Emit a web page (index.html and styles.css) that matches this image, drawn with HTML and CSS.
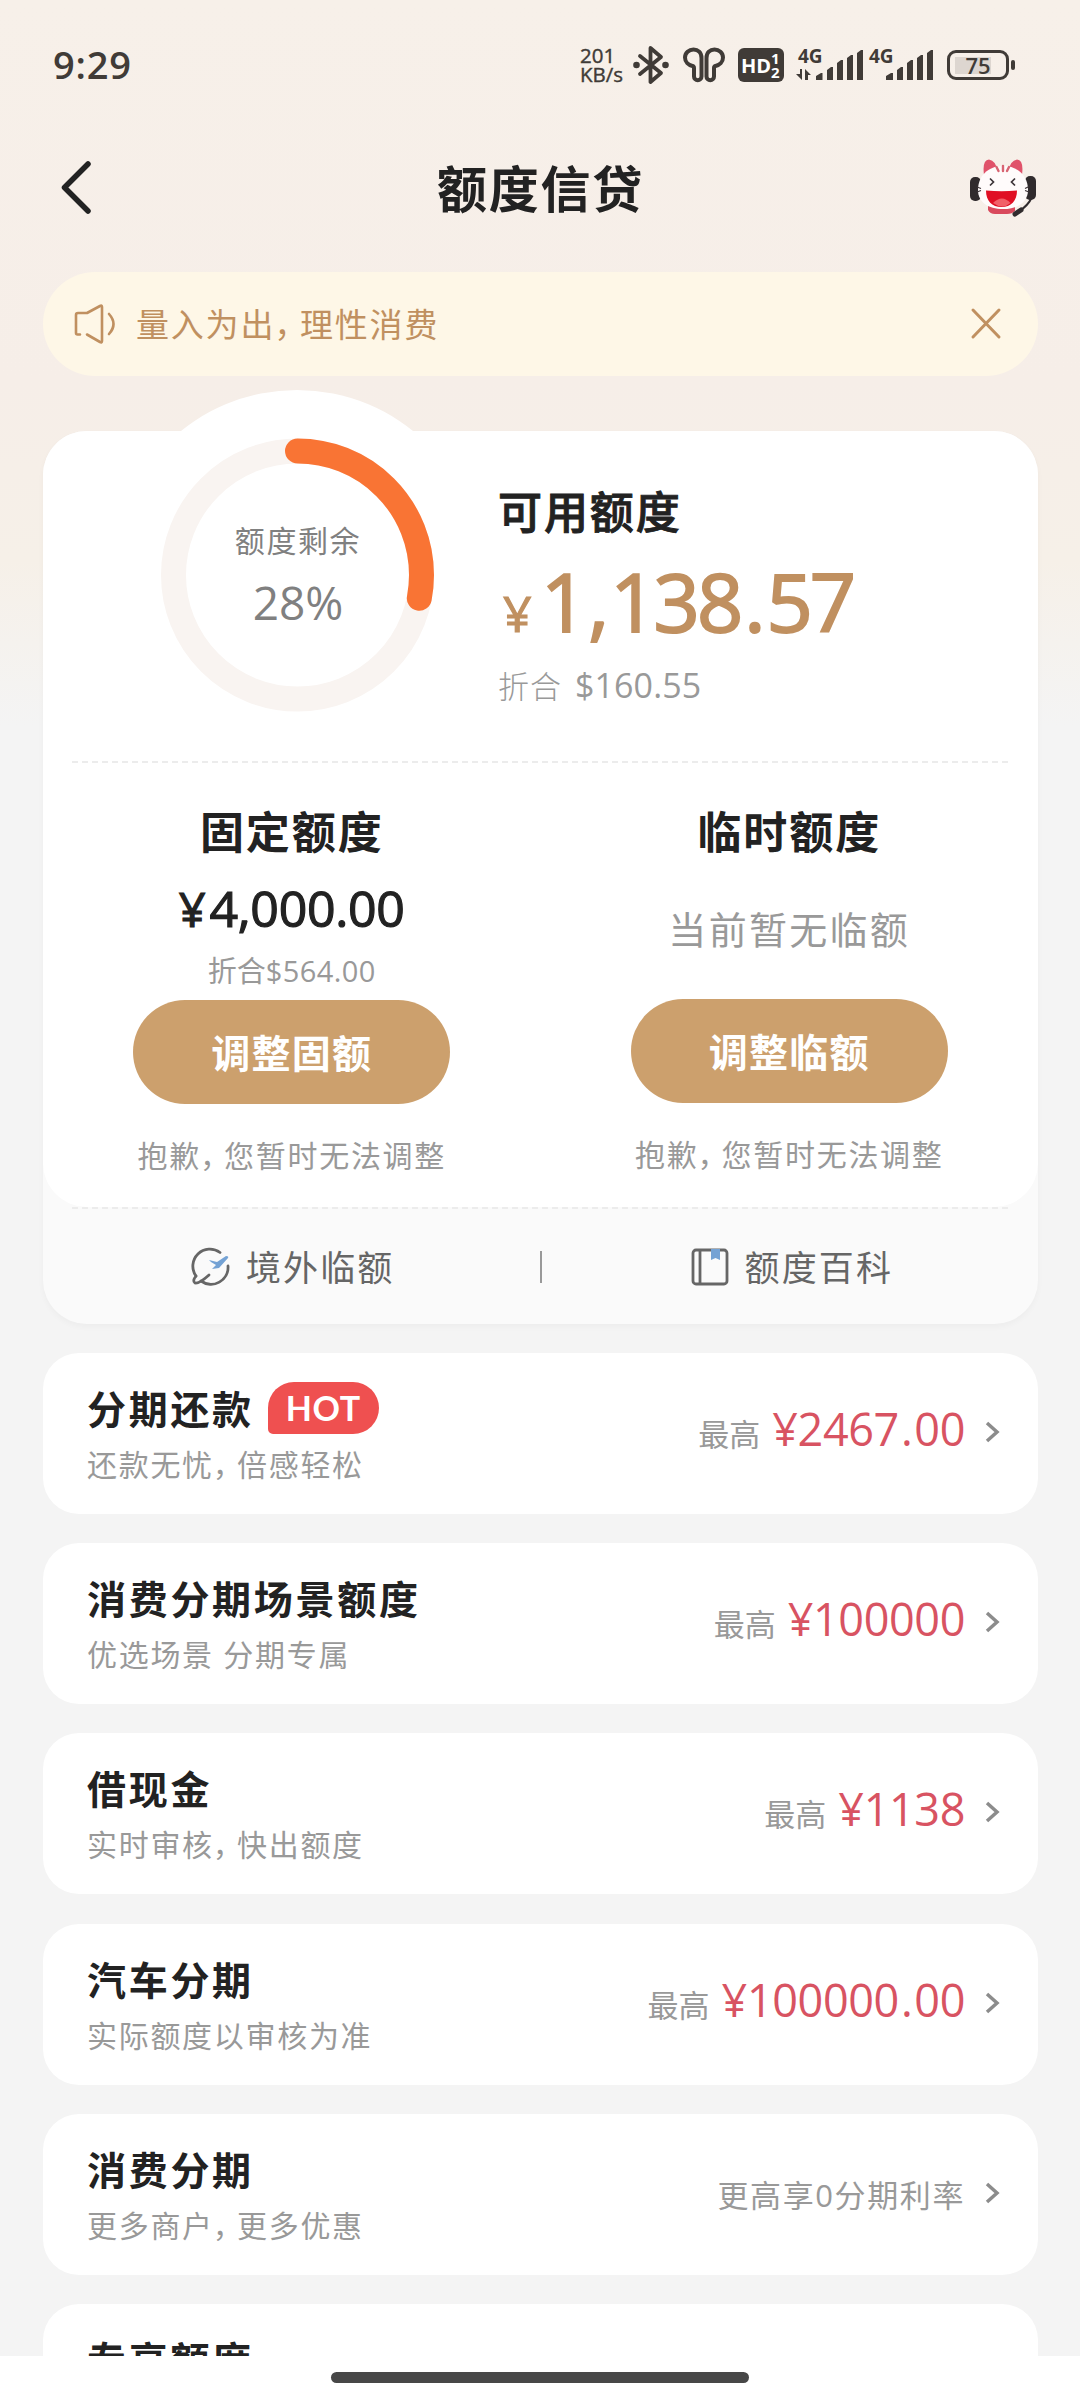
FILE: index.html
```html
<!DOCTYPE html>
<html lang="zh-CN">
<head>
<meta charset="utf-8">
<title>额度信贷</title>
<link rel="stylesheet" href="styles.css">
</head>
<body>
<div class="screen">
  <header class="status">
    <span class="clock">9:29</span>
    <div class="indicators">
      <div class="speed"><span>201</span><span>KB/s</span></div>
      <svg class="ic-bt" width="36" height="40" viewBox="0 0 36 40" fill="none" stroke="#403b37" stroke-width="3.8" stroke-linejoin="round" stroke-linecap="round"><path d="M7 11 28 28 17.500 37V3L28 12 7 29"/><circle cx="3.500" cy="20" r="3.300" fill="#403b37" stroke="none"/><circle cx="32.500" cy="20" r="3.300" fill="#403b37" stroke="none"/></svg>
      <svg class="ic-buds" width="42" height="36" viewBox="0 0 42 36" fill="none" stroke="#403b37" stroke-width="4" stroke-linejoin="round"><path d="M18.500 11C18.500 5.500 15 2.500 10.500 2.500S2 6 2 10.500s3.500 7.500 7.500 8.500Q11 19.500 11 21v8.500a3.750 3.750 0 0 0 7.500 0Z"/><path d="M23.500 11c0-5.500 3.500-8.500 8-8.500S40 6 40 10.500s-3.500 7.500-7.500 8.500Q31 19.500 31 21v8.500a3.750 3.750 0 0 1-7.500 0Z"/></svg>
      <div class="hd"><span>HD</span><span class="hd-n"><i>1</i><i>2</i></span></div>
      <svg class="ic-sig" width="67" height="34" viewBox="0 0 67 34" fill="#403b37"><text x="2" y="15" class="gen">4G</text><path d="M6 21v11L0 26h4v-5ZM9 32V21l6 6h-3v5ZM20 32v-4l5-3h1.500v7ZM31 32V22l4-3h2v13ZM41 32V15l4-3h2v20ZM51 32V10l4-3h2v25ZM61 32V5l4-3h2v30Z"/></svg>
      <svg class="ic-sig2" width="66" height="34" viewBox="0 0 66 34" fill="#403b37"><text x="1" y="15" class="gen">4G</text><path d="M18 32v-4l5-3h2v7ZM29 32V22l4-3h2v13ZM39 32V15l4-3h2v20ZM49 32V10l4-3h2v25ZM59 32V5l4-3h2v30Z"/></svg>
      <div class="battery"><span>75</span></div><span class="cap"></span>
    </div>
  </header>

  <nav class="titlebar">
    <svg width="32" height="56" viewBox="0 0 32 56" fill="none" stroke="#222" stroke-width="5.500" stroke-linecap="round" stroke-linejoin="round"><path d="M27 4 3.500 27.500 27 51"/></svg>
    <h1>额度信贷</h1>
    <svg class="mascot" width="70" height="60" viewBox="0 0 70 60">
      <rect x="2" y="19" width="11" height="24" rx="5" fill="#302b2d"/><rect x="57" y="18" width="11" height="24" rx="5" fill="#302b2d"/>
      <path d="M16 17Q14 2 21 1.500 28 3 29 12ZM54 17Q56 2 49 1.500 42 3 41 12Z" fill="#e0526a"/>
      <path d="M20 48h27v5q-3 3-8 3H27q-5 0-7-4Z" fill="#d94a5d"/>
      <path d="M35 8C51 8 60 19 60 32c0 12-10 19-25 19S10 44 10 32C10 19 19 8 35 8Z" fill="#fffbfb"/>
      <path d="m28.500 9 2 4M35 8v5m6-4-2 4" fill="none" stroke="#d86472" stroke-width="2.400" stroke-linecap="round"/>
      <path d="m22 20.500 3.500 3.500-3.500 3.500M47 20.500l-3.500 3.500 3.500 3.500" fill="none" stroke="#3d3438" stroke-width="1.700"/>
      <path d="m9 29 4 1.500M9 34l4-1.500M61 28.500l-4 2M61 34l-4-1.500" stroke="#3d3438" stroke-width="1.200"/>
      <path d="M18 32.500q15.500 1.500 31 0c0 10.500-6 16.500-15.500 16.500S18 43 18 32.500Z" fill="#e00f24"/>
      <path d="M25 45q9-9 17.500 0-8 7-17.500 0Z" fill="#f16068"/>
      <path d="M64 39q-4 9-14 15" fill="none" stroke="#302b2d" stroke-width="2"/><path d="m47 56 6-4" stroke="#302b2d" stroke-width="5" stroke-linecap="round"/>
    </svg>
  </nav>

  <div class="notice">
    <svg width="42" height="40" viewBox="0 0 42 40" fill="none" stroke="#c09060" stroke-width="2.600" stroke-linecap="round" stroke-linejoin="round"><path d="M6 30.500H3.500Q2 30.500 2 29V11q0-2 2-2h9L26 2q2-1 2 1v34q0 2-2 1l-13-7.500M35 10q9 10 0 20"/></svg>
    <span class="notice-text">量入为出<span class="comma">，</span>理性消费</span>
    <svg width="32" height="32" viewBox="0 0 32 32" fill="none" stroke="#c09060" stroke-width="3" stroke-linecap="round"><path d="m3 2 26 27M29 2 3 29"/></svg>
  </div>

  <section class="quota">
    <div class="quota-main">
      <div class="summary">
        <div class="gauge">
          <svg width="274" height="274" viewBox="0 0 274 274" fill="none" stroke-width="25"><circle cx="136.500" cy="137" r="124" stroke="#f9f4f1"/><circle cx="136.500" cy="137" r="124" stroke="#f97434" stroke-linecap="round" pathLength="100" stroke-dasharray="28 100" transform="rotate(-90 136.500 137)"/></svg>
          <div class="gauge-label"><span>额度剩余</span><b>28%</b></div>
        </div>
        <div class="available">
          <h2>可用额度</h2>
          <div class="amount"><small>¥</small>1<i>,</i>138<i>.</i>57</div>
          <div class="usd">折合<span>$160.55</span></div>
        </div>
      </div>
      <div class="dash"></div>
      <div class="cols">
        <div class="col">
          <h2>固定额度</h2>
          <div class="fixed"><span class="yen">¥</span>4,000.00</div>
          <div class="fixed-usd">折合<span>$564.00</span></div>
          <button>调整固额</button>
          <p>抱歉<span class="comma">，</span>您暂时无法调整</p>
        </div>
        <div class="col">
          <h2>临时额度</h2>
          <div class="none">当前暂无临额</div>
          <button>调整临额</button>
          <p>抱歉<span class="comma">，</span>您暂时无法调整</p>
        </div>
      </div>
    </div>
    <div class="dash"></div>
    <div class="links">
      <div class="link"><svg width="38" height="38" viewBox="0 0 38 38" fill="none" stroke="#666" stroke-width="2.800" stroke-linecap="round"><path d="M28 4.500A17 17 0 0 0 4 28M9 33A17 17 0 0 0 36 18"/><path d="M4 28q-4 5-1 7 4 1 14-8"/><path d="m17 12 8 2 9-6q3 0 2 2l-9 10-7 1 4-4-5-3Z" fill="#74a2d4" stroke="none"/></svg><span>境外临额</span></div>
      <i class="bar"></i>
      <div class="link"><svg width="38" height="38" viewBox="0 0 38 38" fill="none" stroke="#666" stroke-width="2.800"><rect x="2" y="2" width="34" height="34" rx="3"/><path d="M9 2v34"/><path d="M20 1h9v11l-4.500-2-4.500 2Z" fill="#74a2d4" stroke="none"/></svg><span>额度百科</span></div>
    </div>
  </section>

  <main class="list">
    <article class="item"><div class="item-text"><h3>分期还款<em>HOT</em></h3><p>还款无忧<span class="comma">，</span>倍感轻松</p></div><div class="item-value"><span>最高</span><strong>¥2467<i>.</i>00</strong></div><svg width="16" height="22" viewBox="0 0 16 22"><path d="m3 2 10 9-10 9"/></svg></article>
    <article class="item"><div class="item-text"><h3>消费分期场景额度</h3><p>优选场景 分期专属</p></div><div class="item-value"><span>最高</span><strong>¥100000</strong></div><svg width="16" height="22" viewBox="0 0 16 22"><path d="m3 2 10 9-10 9"/></svg></article>
    <article class="item"><div class="item-text"><h3>借现金</h3><p>实时审核<span class="comma">，</span>快出额度</p></div><div class="item-value"><span>最高</span><strong>¥1138</strong></div><svg width="16" height="22" viewBox="0 0 16 22"><path d="m3 2 10 9-10 9"/></svg></article>
    <article class="item"><div class="item-text"><h3>汽车分期</h3><p>实际额度以审核为准</p></div><div class="item-value"><span>最高</span><strong>¥100000<i>.</i>00</strong></div><svg width="16" height="22" viewBox="0 0 16 22"><path d="m3 2 10 9-10 9"/></svg></article>
    <article class="item"><div class="item-text"><h3>消费分期</h3><p>更多商户<span class="comma">，</span>更多优惠</p></div><div class="item-value item-note">更高享0分期利率</div><svg width="16" height="22" viewBox="0 0 16 22"><path d="m3 2 10 9-10 9"/></svg></article>
    <article class="item"><div class="item-text"><h3>专享额度</h3></div></article>
  </main>
  <footer class="home"><span></span></footer>
</div>
</body>
</html>
```
FILE: styles.css
```css
* { box-sizing: border-box; margin: 0; padding: 0; }
body { font-family: "Open Sans", "Noto Sans CJK SC", sans-serif; color: #222; }
i, em { font-style: normal; }
svg { display: block; flex: none; overflow: visible; }
.screen { width: 1080px; height: 2400px; overflow: hidden; display: flex; flex-direction: column; background: linear-gradient(#f7f0e9 0, #f6eee8 380px, #f6f0e8 560px, #f4f4f4 725px); }
.comma { font-family: "Noto Sans CJK SC", sans-serif; font-feature-settings: "halt"; line-height: 1; margin: 0 7.500px 0 -1px; }

.status { height: 130px; padding: 0 64px 0 53px; display: flex; align-items: center; justify-content: space-between; color: #403b37; flex: none; }
.clock { font-size: 38px; font-weight: 600; letter-spacing: .8px; margin-top: -2px; }
.indicators { display: flex; align-items: center; }
.speed { display: flex; flex-direction: column; font-size: 20.500px; line-height: 19px; width: 52px; font-weight: 500; -webkit-text-stroke: .4px #403b37; }
.ic-bt { margin-left: 1px; }
.ic-buds { margin-left: 14px; }
.hd { margin-left: 13px; width: 46px; height: 34px; border-radius: 6px; background: #403b37; color: #fff; display: flex; align-items: center; font-size: 20px; font-weight: 700; padding-left: 3px; }
.hd-n { display: flex; flex-direction: column; font-size: 15px; line-height: 14px; }
.gen { font: 700 19px "Open Sans", sans-serif; }
.ic-sig { margin-left: 12px; }
.ic-sig2 { margin-left: 5px; }
.battery { margin-left: 13px; width: 62px; height: 30px; border: 3px solid #403b37; border-radius: 9px; display: flex; align-items: center; justify-content: center; font-size: 22px; font-weight: 600; background: linear-gradient(#ddd6d0, #ddd6d0) 5px center / 36px 17px no-repeat; }
.cap { width: 4px; height: 10px; border-radius: 2px; background: #403b37; margin: 0 1px 0 2px; }

.titlebar { height: 142px; padding: 0 42px 26px 61px; display: flex; align-items: center; justify-content: space-between; flex: none; }
.titlebar h1 { font-size: 50px; line-height: 60px; letter-spacing: 1.7px; margin: 2px 0 0 20px; }

.notice { margin: 0 42px 0 43px; height: 104px; border-radius: 52px; background: #fef7e7; display: flex; align-items: center; padding: 0 36px 0 31px; color: #c09060; flex: none; }
.notice-text { flex: 1; margin-left: 20px; font-size: 33px; letter-spacing: 1.8px; margin-top: -2px; }

.quota { margin: 55px 42px 0 43px; height: 893px; border-radius: 44px; background: #fafafa; box-shadow: 0 3px 6px rgba(0,0,0,.03); flex: none; }
.quota-main { height: 776px; border-radius: 44px; background: #fff; }
.summary { height: 330px; display: flex; }
.gauge { position: relative; width: 455px; padding: 7px 0 0 118px; }
.gauge::before { content: ""; position: absolute; left: 69px; top: -41px; width: 370px; height: 370px; border-radius: 50%; background: #fff; }
.gauge svg { position: relative; }
.gauge-label { position: absolute; left: 118px; top: 7px; width: 274px; height: 274px; display: flex; flex-direction: column; align-items: center; padding-top: 81px; color: #808080; }
.gauge-label span { font-size: 30px; line-height: 44px; letter-spacing: 1.6px; }
.gauge-label b { font-size: 46px; font-weight: 400; line-height: 60px; margin-top: 9px; }
.available { padding-top: 51px; }
h2 { font-size: 44px; line-height: 60px; letter-spacing: 1.9px; font-weight: 700; }
.available h2 { font-weight: 500; -webkit-text-stroke: .9px #222; }
.amount { display: flex; align-items: baseline; font-size: 81px; line-height: 100px; font-weight: 400; -webkit-text-stroke: 2px #c09060; color: #c09060; letter-spacing: -3px; margin-top: 9px; }
.amount small { font-size: 50px; width: 43px; padding-left: 5px; -webkit-text-stroke-width: 1.2px; }
.amount i { padding: 0 4px; }
.usd { font-size: 31px; line-height: 44px; color: #999; font-weight: 300; letter-spacing: 1px; margin-top: 0; display: flex; align-items: baseline; }
.usd span { font-size: 34px; font-weight: 400; letter-spacing: .1px; margin-left: 13px; }
.dash { height: 2px; margin: 0 29px; background: repeating-linear-gradient(90deg, #ececec 0 6px, transparent 6px 10px); }
.cols { display: grid; grid-template-columns: 1fr 1fr; }
.col { display: flex; flex-direction: column; align-items: center; padding-top: 39px; }
.fixed { font-size: 50px; line-height: 60px; font-weight: 400; -webkit-text-stroke: 1.2px #222; letter-spacing: -.3px; margin-top: 16px; }
.yen { font-size: 47px; margin-right: 4px; }
.fixed-usd { font-size: 29px; line-height: 40px; color: #999; margin-top: 12px; height: 49px; }
.fixed-usd span { letter-spacing: .4px; }
.none { font-size: 38px; line-height: 60px; color: #999; letter-spacing: 2.300px; margin: 37px 0 40px; }
button { width: 317px; height: 104px; border: 0; border-radius: 52px; background: #cca06d; color: #fff; font: 700 39px "Noto Sans CJK SC", sans-serif; letter-spacing: 1.300px; padding-bottom: 3px; flex: none; }
.col p { font-size: 30px; line-height: 44px; letter-spacing: 1.700px; color: #999; margin-top: 30px; }
.links { height: 115px; display: flex; align-items: center; justify-content: space-between; padding: 0 145px 0 149px; color: #666; font-size: 35px; letter-spacing: 2.100px; }
.link { display: flex; align-items: center; gap: 16px; }
.link span { margin-top: -2px; }
.bar { width: 2px; height: 32px; background: #999; margin-right: 3px; }

.list { margin: 29px 42px 0 43px; height: 1003px; overflow: hidden; display: flex; flex-direction: column; gap: 29.200px; flex: none; }
.item { height: 161px; border-radius: 36px; background: #fff; display: flex; flex: none; padding: 0 38px 0 44px; }
.item-text { flex: 1; padding-top: 28px; }
.item h3 { height: 56px; display: flex; align-items: center; font-size: 39px; line-height: 56px; letter-spacing: 2.700px; font-weight: 600; }
.item em { height: 52px; width: 111px; margin: -2px 0 0 14px; border-radius: 26px 26px 26px 5px; background: #ef5050; color: #fff; font: 700 34px/51px Lato, sans-serif; letter-spacing: .6px; text-align: center; }
.item p { font-size: 30px; line-height: 44px; letter-spacing: 1.700px; color: #999; margin-top: 6px; }
.item-value { display: flex; align-items: baseline; height: 60px; margin-top: 46px; line-height: 60px; color: #999; font-size: 31px; }
.item-value strong { font-size: 45px; font-weight: 400; color: #d85362; margin-left: 12px; letter-spacing: -.4px; }
.item-value strong i { padding: 0 2px; }
.item-note { margin-top: 51px; letter-spacing: 1.600px; }
.item > svg { margin: 68px 0 0 19px; fill: none; stroke: #8c8c8c; stroke-width: 3.500; }
.home { flex: 1; background: #fff; display: flex; justify-content: center; padding-top: 16px; }
.home span { width: 418px; height: 11px; border-radius: 6px; background: #474747; }
```
